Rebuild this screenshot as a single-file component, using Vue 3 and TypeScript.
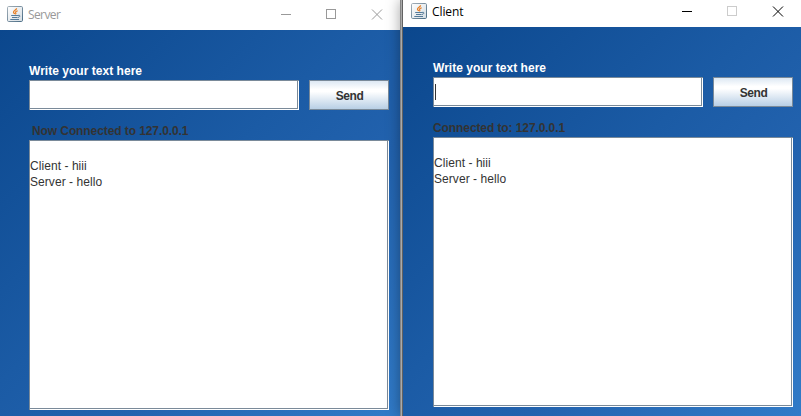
<script setup lang="ts">
interface ChatWindow {
  id: string
  title: string
  status: string
  active: boolean
  lines: string[]
}

const windows: ChatWindow[] = [
  { id: 'server', title: 'Server', status: 'Now Connected to 127.0.0.1', active: false, lines: ['Client - hiii', 'Server - hello'] },
  { id: 'client', title: 'Client', status: 'Connected to: 127.0.0.1', active: true, lines: ['Client - hiii', 'Server - hello'] },
]
</script>

<template>
  <main class="desktop">
    <section v-for="win in windows" :key="win.id" class="window" :class="[win.id, { active: win.active }]">
      <header class="titlebar">
        <svg class="java" width="16" height="16" viewBox="0 0 16 16" fill="none">
          <defs>
            <linearGradient :id="'tile-' + win.id" x1="0" y1="0" x2="1" y2="1">
              <stop offset="0" stop-color="#fff" />
              <stop offset="1" stop-color="#d4dce2" />
            </linearGradient>
            <linearGradient :id="'edge-' + win.id" x1="0" y1="0" x2="1" y2="1">
              <stop offset="0" stop-color="#a3afb8" />
              <stop offset="1" stop-color="#4b6d86" />
            </linearGradient>
          </defs>
          <rect x="0.5" y="0.5" width="15" height="15" rx="1.2" :fill="`url(#tile-${win.id})`" :stroke="`url(#edge-${win.id})`" />
          <path d="M9.6 2.3C9.8 4 6.2 4.7 6.5 6.3C6.6 7 7.4 7.3 7.7 8M10.7 4.7C9 5.3 8 6 8.8 7C9.2 7.6 8.8 8 8.3 8.4" stroke="#e87d22" stroke-width="1.2" />
          <path d="M4.2 9.5H11M5 11.5H10.5M3.3 13.5H12M11 9.4Q13.3 8.9 12.8 10.3Q12.4 11.3 10.8 11.5" stroke="#557b99" stroke-width="1" />
        </svg>
        <span class="title">{{ win.title }}</span>
        <svg class="controls" width="102" height="12" viewBox="0 0 102 12" fill="none" shape-rendering="crispEdges">
          <path class="glyph" d="M0 5.5H10" />
          <rect class="maximize" x="45.5" y="0.5" width="9" height="9" />
          <path class="glyph" d="M91 0.5L101 10.5M101 0.5L91 10.5" shape-rendering="auto" />
        </svg>
      </header>
      <div class="content">
        <label class="prompt">Write your text here</label>
        <div class="compose">
          <div class="field entry"><i v-if="win.active" class="caret"></i></div>
          <button class="send" type="button">Send</button>
        </div>
        <div class="status">{{ win.status }}</div>
        <div class="field log">
          <p v-for="line in win.lines" :key="line">{{ line }}</p>
        </div>
      </div>
    </section>
  </main>
</template>

<style>
body {
  margin: 0;
  overflow: hidden;
}
</style>

<style scoped>
.desktop {
  display: flex;
  width: 801px;
  height: 416px;
  overflow: hidden;
  background: #fff;
  font-family: "Liberation Sans", Arial, sans-serif;
}
.window {
  box-sizing: border-box;
  display: flex;
  flex-direction: column;
  height: 416px;
  overflow: hidden;
}
.server {
  width: 400px;
  flex: none;
}
.client {
  flex: 1;
  border-left: 3px solid;
  border-image: linear-gradient(90deg, #858585 0 1px, #aaa 1px 2px, #626262 2px 3px) 0 0 0 3;
  box-shadow: 0 0 13px rgba(0, 0, 0, 0.36);
}
.titlebar {
  box-sizing: border-box;
  display: flex;
  flex: none;
  height: 30px;
  padding: 6px 17px 0 7px;
  background: #fff;
}
.client .titlebar {
  height: 27px;
  padding: 3px 17px 0 8px;
}
.java {
  flex: none;
}
.title {
  margin-left: 5px;
  font: 12px/17px "Open Sans", "Noto Sans", sans-serif;
  letter-spacing: -0.6px;
  color: #999;
}
.active .title {
  color: #000;
  letter-spacing: -0.1px;
}
.controls {
  flex: none;
  margin: 3px 0 0 auto;
}
.glyph,
.maximize {
  stroke: #999;
}
.active .glyph {
  stroke: #000;
}
.active .maximize {
  stroke: #ccc;
}
.content {
  flex: 1;
  padding: 32px 0 0 29px;
  background: linear-gradient(135deg, #0b478d 0%, #1b5ba5 45%, #2262ae 65%, #317bc8 100%);
}
.client .content {
  padding-left: 30px;
}
.prompt,
.status {
  display: block;
  height: 18px;
  font-size: 12px;
  font-weight: bold;
  line-height: 18px;
  color: #fff;
  white-space: nowrap;
}
.prompt {
  letter-spacing: 0.03px;
}
.compose {
  display: flex;
  gap: 10px;
}
.field {
  box-sizing: border-box;
  border: solid #7a8a99;
  border-width: 1px 0 0 1px;
  background: #fff;
  box-shadow: inset -1px -1px #fff, inset -2px -2px #7a8a99;
}
.entry {
  width: 270px;
  height: 30px;
  padding: 6px 0 0 1px;
}
.caret {
  display: block;
  width: 1px;
  height: 16px;
  background: #333;
}
.send {
  box-sizing: border-box;
  width: 80px;
  height: 30px;
  padding: 1px 0 0 1px;
  border: 1px solid #7a8a99;
  border-radius: 0;
  background: linear-gradient(#dde8f3 0, #fff 30%, #fff 38%, #b8cfe5 100%);
  font: bold 12px/28px "Liberation Sans", Arial, sans-serif;
  letter-spacing: -0.4px;
  color: #333;
}
.status {
  height: 20px;
  padding: 10px 0 0 3px;
  line-height: 22px;
  letter-spacing: -0.09px;
  color: #333;
}
.client .status {
  padding-left: 0;
}
.log {
  width: 360px;
  height: 270px;
  padding-top: 17px;
}
.log p {
  margin: 0;
  font-size: 12px;
  line-height: 16px;
  letter-spacing: 0.06px;
  color: #333;
}
</style>
